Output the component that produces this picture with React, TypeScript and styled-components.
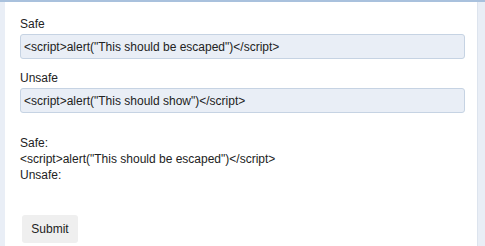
import React, { useState } from "react";
import styled, { createGlobalStyle } from "styled-components";

const GlobalStyle = createGlobalStyle`
    html, body {
        margin: 0;
        padding: 0;
        background: #e9eef6;
        font-family: "Liberation Sans", Arial, sans-serif;
        color: #222;
    }
`;

const Page = styled.div`
    border-top: 2px solid #a9c1dd;
    padding: 0 7px 0 5px;
    height: 244px;
    display: flex;
`;

const Panel = styled.form`
    flex: 1;
    background: #fff;
    border-right: 1px solid #dde4ee;
    padding: 14px 12px 0 15px;
    display: flex;
    flex-direction: column;
`;

const Field = styled.div`
    display: flex;
    flex-direction: column;
    gap: 2px;
    margin-bottom: 11px;
`;

const Label = styled.label`
    font-size: 12px;
    line-height: 16px;
`;

const Input = styled.input`
    font-family: inherit;
    font-size: 12px;
    color: #222;
    height: 25px;
    box-sizing: border-box;
    padding: 0 3px;
    background: #e9eef6;
    border: 1px solid #c6d3e3;
    border-radius: 3px;
    outline: none;
`;

const Output = styled.div`
    margin-top: 11px;
    font-size: 12px;
    line-height: 16px;
`;

const Button = styled.button`
    margin: 32px 0 0 2px;
    align-self: flex-start;
    font-family: inherit;
    font-size: 12px;
    color: #222;
    background: #efefef;
    border: none;
    border-radius: 3px;
    padding: 0 9px;
    height: 28px;
    width: 56px;
`;

function App() {
    const [safe, setSafe] = useState('<script>alert("This should be escaped")</script>');
    const [unsafe, setUnsafe] = useState('<script>alert("This should show")</script>');
    return (
        <>
            <GlobalStyle />
            <Page>
                <Panel onSubmit={(e) => e.preventDefault()}>
                    <Field>
                        <Label>Safe</Label>
                        <Input value={safe} onChange={(e) => setSafe(e.target.value)} />
                    </Field>
                    <Field>
                        <Label>Unsafe</Label>
                        <Input value={unsafe} onChange={(e) => setUnsafe(e.target.value)} />
                    </Field>
                    <Output>
                        <div>Safe:</div>
                        <div>{safe}</div>
                        <div>Unsafe:</div>
                    </Output>
                    <Button type="submit">Submit</Button>
                </Panel>
            </Page>
        </>
    );
}

export default App;
